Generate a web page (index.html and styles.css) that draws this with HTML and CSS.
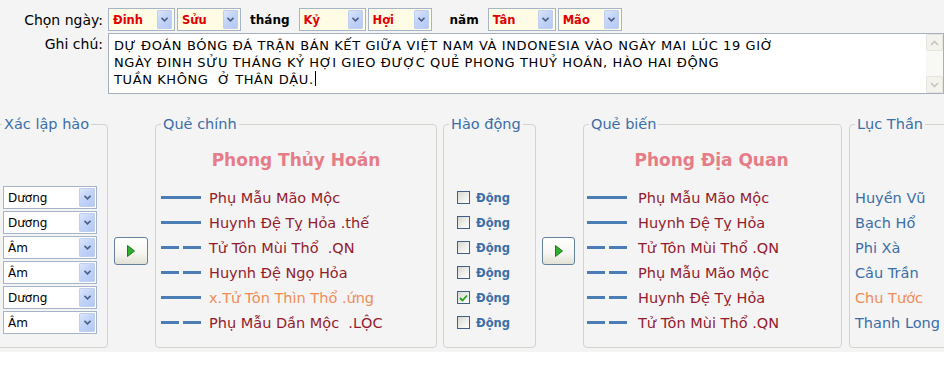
FILE: index.html
```html
<!DOCTYPE html>
<html lang="vi">
<head>
<meta charset="utf-8">
<title>Gieo quẻ</title>
<link rel="stylesheet" href="styles.css">
</head>
<body>
<div class="app">
  <div class="top">
    <div class="lbl lbl-date">Chọn ngày:</div>
    <div class="daterow">
      <div class="sel ysel w67"><span>Đinh</span><i class="arr"><svg width="7" height="5" viewBox="0 0 7 5"><path d="M0.5 0.8 L3.5 3.8 L6.5 0.8" fill="none" stroke="#4b5f86" stroke-width="1.6"/></svg></i></div>
      <div class="sel ysel w64 pair"><span>Sửu</span><i class="arr"><svg width="7" height="5" viewBox="0 0 7 5"><path d="M0.5 0.8 L3.5 3.8 L6.5 0.8" fill="none" stroke="#4b5f86" stroke-width="1.6"/></svg></i></div>
      <span class="word w-thang">tháng</span>
      <div class="sel ysel w67"><span>Kỷ</span><i class="arr"><svg width="7" height="5" viewBox="0 0 7 5"><path d="M0.5 0.8 L3.5 3.8 L6.5 0.8" fill="none" stroke="#4b5f86" stroke-width="1.6"/></svg></i></div>
      <div class="sel ysel w64 pair"><span>Hợi</span><i class="arr"><svg width="7" height="5" viewBox="0 0 7 5"><path d="M0.5 0.8 L3.5 3.8 L6.5 0.8" fill="none" stroke="#4b5f86" stroke-width="1.6"/></svg></i></div>
      <span class="word w-nam">năm</span>
      <div class="sel ysel w68"><span>Tân</span><i class="arr"><svg width="7" height="5" viewBox="0 0 7 5"><path d="M0.5 0.8 L3.5 3.8 L6.5 0.8" fill="none" stroke="#4b5f86" stroke-width="1.6"/></svg></i></div>
      <div class="sel ysel w64 pair"><span>Mão</span><i class="arr"><svg width="7" height="5" viewBox="0 0 7 5"><path d="M0.5 0.8 L3.5 3.8 L6.5 0.8" fill="none" stroke="#4b5f86" stroke-width="1.6"/></svg></i></div>
    </div>
    <div class="lbl lbl-note">Ghi chú:</div>
    <div class="note">
      <div class="note-text">DỰ ĐOÁN BÓNG ĐÁ TRẬN BÁN KẾT GIỮA VIỆT NAM VÀ INDONESIA VÀO NGÀY MAI LÚC 19 GIỜ
NGÀY ĐINH SỬU THÁNG KỶ HỢI GIEO ĐƯỢC QUẺ PHONG THUỶ HOÁN, HÀO HAI ĐỘNG
TUẦN KHÔNG  Ở THÂN DẬU.<span class="caret"></span></div>
      <div class="vscroll">
        <div class="sbtn"><svg width="9" height="6" viewBox="0 0 9 6"><path d="M1 5 L4.5 1.5 L8 5" fill="none" stroke="#c9c7ba" stroke-width="1.6"/></svg></div>
        <div class="strack"></div>
        <div class="sbtn"><svg width="9" height="6" viewBox="0 0 9 6"><path d="M1 1 L4.5 4.5 L8 1" fill="none" stroke="#c9c7ba" stroke-width="1.6"/></svg></div>
      </div>
    </div>
  </div>

  <div class="groups">
    <fieldset class="grp g1">
      <legend>Xác lập hào</legend>
      <div class="body spacer">
        <div class="row"><div class="sel wsel"><span>Dương</span><i class="arr"><svg width="7" height="5" viewBox="0 0 7 5"><path d="M0.5 0.8 L3.5 3.8 L6.5 0.8" fill="none" stroke="#4b5f86" stroke-width="1.6"/></svg></i></div></div>
        <div class="row"><div class="sel wsel"><span>Dương</span><i class="arr"><svg width="7" height="5" viewBox="0 0 7 5"><path d="M0.5 0.8 L3.5 3.8 L6.5 0.8" fill="none" stroke="#4b5f86" stroke-width="1.6"/></svg></i></div></div>
        <div class="row"><div class="sel wsel"><span>Âm</span><i class="arr"><svg width="7" height="5" viewBox="0 0 7 5"><path d="M0.5 0.8 L3.5 3.8 L6.5 0.8" fill="none" stroke="#4b5f86" stroke-width="1.6"/></svg></i></div></div>
        <div class="row"><div class="sel wsel"><span>Âm</span><i class="arr"><svg width="7" height="5" viewBox="0 0 7 5"><path d="M0.5 0.8 L3.5 3.8 L6.5 0.8" fill="none" stroke="#4b5f86" stroke-width="1.6"/></svg></i></div></div>
        <div class="row"><div class="sel wsel"><span>Dương</span><i class="arr"><svg width="7" height="5" viewBox="0 0 7 5"><path d="M0.5 0.8 L3.5 3.8 L6.5 0.8" fill="none" stroke="#4b5f86" stroke-width="1.6"/></svg></i></div></div>
        <div class="row"><div class="sel wsel"><span>Âm</span><i class="arr"><svg width="7" height="5" viewBox="0 0 7 5"><path d="M0.5 0.8 L3.5 3.8 L6.5 0.8" fill="none" stroke="#4b5f86" stroke-width="1.6"/></svg></i></div></div>
      </div>
    </fieldset>

    <div class="play play1"><svg width="8" height="12" viewBox="0 0 8 12"><path d="M0.5 0.5 L7.5 6 L0.5 11.5 Z" fill="#2fae2f" stroke="#1d7a1d" stroke-width="1"/></svg></div>

    <fieldset class="grp g2">
      <legend>Quẻ chính</legend>
      <div class="body">
        <div class="title">Phong Thủy Hoán</div>
        <div class="row"><i class="bar"></i><span class="hx">Phụ Mẫu Mão Mộc</span></div>
        <div class="row"><i class="bar"></i><span class="hx">Huynh Đệ Tỵ Hỏa .thế</span></div>
        <div class="row"><i class="bar yin"></i><span class="hx">Tử Tôn Mùi Thổ  .QN</span></div>
        <div class="row"><i class="bar yin"></i><span class="hx">Huynh Đệ Ngọ Hỏa</span></div>
        <div class="row"><i class="bar"></i><span class="hx hx-move">x.Tử Tôn Thìn Thổ .ứng</span></div>
        <div class="row"><i class="bar yin"></i><span class="hx">Phụ Mẫu Dần Mộc  .LỘC</span></div>
      </div>
    </fieldset>

    <fieldset class="grp g3">
      <legend>Hào động</legend>
      <div class="body spacer">
        <div class="row"><i class="cb"></i><span class="cbl">Động</span></div>
        <div class="row"><i class="cb"></i><span class="cbl">Động</span></div>
        <div class="row"><i class="cb"></i><span class="cbl">Động</span></div>
        <div class="row"><i class="cb"></i><span class="cbl">Động</span></div>
        <div class="row"><i class="cb on"><svg width="9" height="8" viewBox="0 0 9 8"><path d="M1 4 L3.5 6.5 L8 1.5" fill="none" stroke="#21a121" stroke-width="1.8"/></svg></i><span class="cbl">Động</span></div>
        <div class="row"><i class="cb"></i><span class="cbl">Động</span></div>
      </div>
    </fieldset>

    <div class="play play2"><svg width="8" height="12" viewBox="0 0 8 12"><path d="M0.5 0.5 L7.5 6 L0.5 11.5 Z" fill="#2fae2f" stroke="#1d7a1d" stroke-width="1"/></svg></div>

    <fieldset class="grp g4">
      <legend>Quẻ biến</legend>
      <div class="body">
        <div class="title">Phong Địa Quan</div>
        <div class="row"><i class="bar"></i><span class="hx">Phụ Mẫu Mão Mộc</span></div>
        <div class="row"><i class="bar"></i><span class="hx">Huynh Đệ Tỵ Hỏa</span></div>
        <div class="row"><i class="bar yin"></i><span class="hx">Tử Tôn Mùi Thổ .QN</span></div>
        <div class="row"><i class="bar yin"></i><span class="hx">Phụ Mẫu Mão Mộc</span></div>
        <div class="row"><i class="bar yin"></i><span class="hx">Huynh Đệ Tỵ Hỏa</span></div>
        <div class="row"><i class="bar yin"></i><span class="hx">Tử Tôn Mùi Thổ .QN</span></div>
      </div>
    </fieldset>

    <fieldset class="grp g5">
      <legend>Lục Thần</legend>
      <div class="body spacer">
        <div class="row"><span class="lt">Huyền Vũ</span></div>
        <div class="row"><span class="lt">Bạch Hổ</span></div>
        <div class="row"><span class="lt">Phi Xà</span></div>
        <div class="row"><span class="lt">Câu Trần</span></div>
        <div class="row"><span class="lt lt-hot">Chu Tước</span></div>
        <div class="row"><span class="lt">Thanh Long</span></div>
      </div>
    </fieldset>
  </div>
</div>
</body>
</html>
```
FILE: styles.css
```css
* { box-sizing: border-box; }
html, body { margin: 0; padding: 0; }
body {
  width: 944px;
  height: 384px;
  overflow: hidden;
  background: #ffffff;
  font-family: "DejaVu Sans", sans-serif;
  color: #000;
}
.app {
  height: 352px;
  background: #f4f4f4;
  padding-top: 8px;
  overflow: hidden;
}

/* ---------- top area ---------- */
.top {
  display: grid;
  grid-template-columns: 103px 836px;
  column-gap: 5px;
  row-gap: 2px;
}
.lbl {
  text-align: right;
  font-size: 14px;
  white-space: nowrap;
}
.lbl-date { align-self: center; }
.lbl-note { padding-top: 3px; line-height: 17px; }

.daterow {
  display: flex;
  align-items: center;
  height: 23px;
}
.word {
  font-size: 12px;
  font-weight: bold;
}
.w-thang { margin: 0 9px 0 9px; }
.w-nam { margin: 0 9px 0 18px; }

.sel {
  display: flex;
  align-items: stretch;
  height: 23px;
  border: 1px solid #a6b4c8;
  background: #fff;
  padding: 1px;
}
.sel span {
  flex: 1;
  display: flex;
  align-items: center;
  padding-left: 3px;
  white-space: nowrap;
}
.sel .arr {
  width: 15px;
  display: flex;
  align-items: center;
  justify-content: center;
  background: linear-gradient(135deg, #dbe6fc 0%, #c3d4f8 45%, #b3c8f3 100%);
  border: 1px solid #c0cff0;
  border-radius: 1px;
}
.ysel { background: #fffce6; }
.ysel span {
  color: #e00000;
  font-weight: bold;
  font-size: 11.5px;
}
.ysel .arr { margin-right: 1px; }
.pair { margin-left: 2px; }
.w67 { width: 67px; }
.w64 { width: 64px; }
.w68 { width: 68px; }

.note {
  display: flex;
  height: 61px;
  border: 1px solid #a6b0bd;
  background: #fff;
}
.note-text {
  flex: 1;
  white-space: pre;
  font-size: 13px;
  letter-spacing: 0.6px;
  line-height: 17px;
  padding: 3px 0 0 5px;
  overflow: hidden;
}
.caret {
  display: inline-block;
  width: 1px;
  height: 15px;
  background: #000;
  vertical-align: -2px;
  margin-left: 1px;
}
.vscroll {
  width: 17px;
  display: flex;
  flex-direction: column;
  background: #f8f8f5;
}
.sbtn {
  height: 17px;
  display: flex;
  align-items: center;
  justify-content: center;
  background: #f3f2ec;
  border: 1px solid #e6e5dd;
  border-radius: 2px;
}
.strack { flex: 1; }

/* ---------- groups ---------- */
.groups {
  display: flex;
  align-items: flex-start;
  margin-top: 22px;
  height: 232px;
}
.grp {
  margin: 0;
  padding: 0;
  border: 1px solid #d3d3cb;
  border-radius: 4px;
  height: 232px;
  min-width: 0;
  flex: none;
}
.grp legend {
  margin-left: 5px;
  padding: 0 2px;
  font-size: 14.5px;
  line-height: 16px;
  color: #3b6ea8;
  white-space: nowrap;
}
.body { display: flex; flex-direction: column; }
.spacer { padding-top: 53px; }
.title {
  margin: 16px 5px 13px 0;
  height: 24px;
  line-height: 24px;
  text-align: center;
  font-size: 17px;
  font-weight: bold;
  color: #e67c87;
}
.row {
  height: 25px;
  display: flex;
  align-items: center;
  white-space: nowrap;
}

.g1 { margin-left: -4px; width: 112px; }
.g1 .body { padding-left: 6px; }
.wsel { width: 94px; }
.wsel span { font-size: 12px; }
.wsel .arr { width: 16px; }

.g2 { margin-left: 7px; width: 282px; }
.g2 .body { padding-left: 5px; }
.g2 .hx { margin-left: 8px; }

.g3 { margin-left: 6px; width: 93px; }
.g3 .body { padding-left: 13px; }

.g4 { margin-left: 8px; width: 259px; }
.g4 .body { padding-left: 3px; }
.g4 .hx { margin-left: 11px; }

.g5 { margin-left: 7px; width: 110px; }
.g5 .body { padding-left: 5px; }

.bar {
  width: 40px;
  height: 3px;
  background: #4a7db3;
  flex: none;
}
.bar.yin {
  background: linear-gradient(to right, #4a7db3 0 18px, transparent 18px 22px, #4a7db3 22px 40px);
}
.hx {
  font-size: 14.5px;
  color: #931b2c;
  white-space: pre;
}
.hx-move { color: #f08c56; }

.cb {
  width: 13px;
  height: 13px;
  border: 1px solid #3d5f8a;
  background: linear-gradient(135deg, #d8d8d2 0%, #ecece8 50%, #ffffff 100%);
  display: flex;
  align-items: center;
  justify-content: center;
  flex: none;
}
.cbl {
  margin-left: 6px;
  font-size: 11.5px;
  font-weight: bold;
  color: #3b6ea8;
}

.lt {
  font-size: 14.5px;
  color: #3b6ea8;
}
.lt-hot { color: #f08c56; }

.play {
  flex: none;
  height: 28px;
  margin-top: 121px;
  border: 1px solid #66809f;
  border-radius: 3px;
  background: linear-gradient(#ffffff 0%, #f6f5f0 60%, #e2e0d6 100%);
  display: flex;
  align-items: center;
  justify-content: center;
}
.play1 { width: 34px; margin-left: 6px; }
.play2 { width: 33px; margin-left: 6px; }
```
